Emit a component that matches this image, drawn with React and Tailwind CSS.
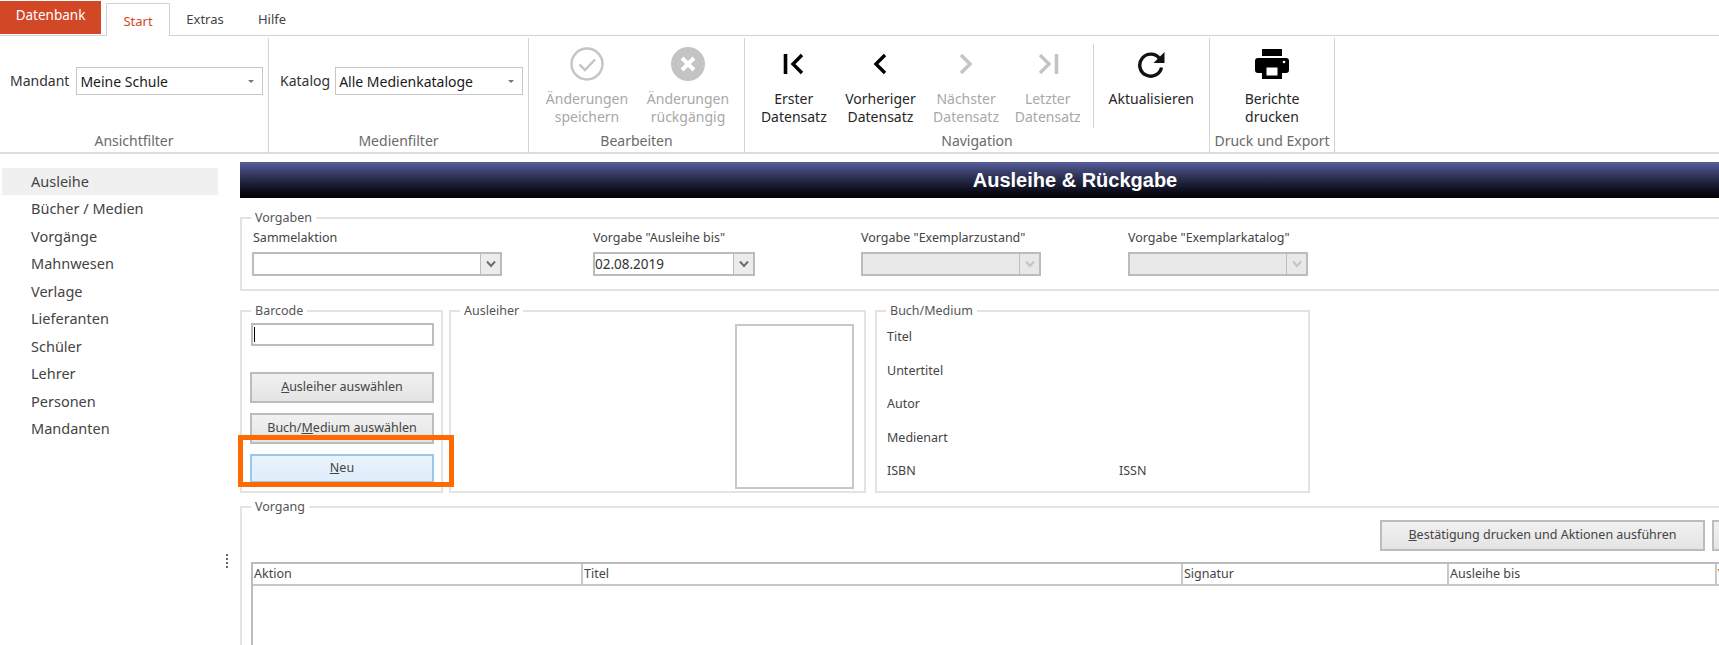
import React from 'react';

const uiFont = "font-['Noto_Sans',sans-serif]";

const Chevron = ({ flip, bar, color }) => (
  <svg width="28" height="28" viewBox="0 0 28 28" fill="none" stroke={color}>
    <g transform={flip ? 'translate(28,0) scale(-1,1)' : undefined}>
      {bar && <path d="M5.5 4v20" strokeWidth="3.6" />}
      <path d={bar ? 'M22 5l-9 9 9 9' : 'M19 5l-9 9 9 9'} strokeWidth="3.4" />
    </g>
  </svg>
);

const RefreshIcon = () => (
  <svg width="28" height="28" viewBox="0 0 28 28" fill="none">
    <path d="M22.5 8.5A11 11 0 1 0 24.5 17.5" stroke="#111" strokeWidth="3.4" />
    <path d="M27.5 2v11h-11z" fill="#111" />
  </svg>
);

const PrinterIcon = () => (
  <svg width="34" height="30" viewBox="0 0 34 30">
    <rect x="7" y="0" width="20" height="7" fill="#000" />
    <rect x="0" y="9" width="34" height="15" rx="3" fill="#000" />
    <rect x="7" y="15" width="20" height="15" fill="#000" />
    <rect x="11.5" y="18.5" width="11" height="8" fill="#fff" />
    <circle cx="29" cy="13" r="1.3" fill="#fff" />
  </svg>
);

const RibbonButton = ({ icon, lines, disabled, width }) => (
  <div className={`flex flex-col items-center pt-[4px] ${width} ${disabled ? 'text-[#a8a8a8]' : 'text-[#262626]'}`}>
    <div className="h-[44px] flex items-center justify-center">{icon}</div>
    <div className="mt-[4px] text-[14px] leading-[18px] text-center whitespace-nowrap">
      {lines.map((l) => (
        <div key={l}>{l}</div>
      ))}
    </div>
  </div>
);

const RibbonGroup = ({ width, label, children, className = '' }) => (
  <div className={`flex flex-col h-[115px] mt-[2px] border-r border-[#d4d4d4] ${width}`}>
    <div className={`flex-1 flex ${className}`}>{children}</div>
    <div className="h-[25px] text-center text-[14px] leading-[26px] text-[#6a6a6a] whitespace-nowrap">{label}</div>
  </div>
);

const RibbonCombo = ({ value, width }) => (
  <div className={`flex items-center justify-between h-[28px] bg-white border border-[#c6c6c6] pl-[3px] pr-[8px] text-[14px] text-[#1a1a1a] ${width}`}>
    <span>{value}</span>
    <span className="w-0 h-0 border-x-[3px] border-x-transparent border-t-[3px] border-t-[#777]" />
  </div>
);

const FormCombo = ({ value, width, disabled }) => (
  <div className={`flex h-[24px] border-2 border-[#bcbcbc] ${width} ${disabled ? 'bg-[#e8e8e8]' : 'bg-white'}`}>
    <span className="flex-1 text-[13.5px] leading-[20px] text-[#333]">{value}</span>
    <span className={`w-[20px] flex items-center justify-center border-l border-[#bcbcbc] ${disabled ? '' : 'bg-[#ececec]'}`}>
      <svg width="10" height="8" viewBox="0 0 10 8" fill="none" stroke={disabled ? '#c4c4c4' : '#6d6d6d'} strokeWidth="2">
        <path d="M1 1.5l4 4.5 4-4.5" />
      </svg>
    </span>
  </div>
);

const Group = ({ label, className = '', children }) => (
  <fieldset className={`border-2 border-[#e3e3e3] min-w-0 ${className}`}>
    <legend className="ml-[9px] px-[4px] text-[12.5px] leading-[16px] text-[#555]">{label}</legend>
    {children}
  </fieldset>
);

const FormButton = ({ children, className = '' }) => (
  <div className={`flex items-center justify-center border-2 border-[#bcbcbc] bg-gradient-to-b from-[#f1f1f1] to-[#e4e4e4] text-[12.5px] text-[#444] whitespace-nowrap ${className}`}>
    {children}
  </div>
);

const navItems = ['Ausleihe', 'Bücher / Medien', 'Vorgänge', 'Mahnwesen', 'Verlage', 'Lieferanten', 'Schüler', 'Lehrer', 'Personen', 'Mandanten'];
const bookRows = ['Titel', 'Untertitel', 'Autor', 'Medienart'];

export default function App() {
  return (
    <div className={`w-[1719px] h-[645px] overflow-hidden bg-white ${uiFont}`}>
      {/* Tabs */}
      <div className="flex items-end h-[36px] border-b border-[#d2d2d2] text-[13px]">
        <div className="w-[101px] h-[33px] mb-[1px] bg-[#d24726] text-white text-center text-[13.5px] leading-[29px]">Datenbank</div>
        <div className="ml-[5px] w-[64px] h-[33px] -mb-[1px] bg-white border border-b-0 border-[#d2d2d2] text-[#d24726] text-center leading-[34px]">Start</div>
        <div className="ml-[15px] w-[40px] h-[33px] text-[#444] text-center leading-[34px]">Extras</div>
        <div className="ml-[27px] w-[40px] h-[33px] text-[#444] text-center leading-[34px]">Hilfe</div>
      </div>

      {/* Ribbon */}
      <div className="flex h-[118px] border-b-2 border-[#dcdcdc]">
        <RibbonGroup width="w-[269px]" label="Ansichtfilter" className="pt-[29px] pl-[10px]">
          <div className="flex items-start gap-[7px] text-[14px] text-[#333]">
            <span className="leading-[28px]">Mandant</span>
            <RibbonCombo value="Meine Schule" width="w-[187px]" />
          </div>
        </RibbonGroup>
        <RibbonGroup width="w-[260px]" label="Medienfilter" className="pt-[29px] pl-[11px]">
          <div className="flex items-start gap-[5px] text-[14px] text-[#333]">
            <span className="leading-[28px]">Katalog</span>
            <RibbonCombo value="Alle Medienkataloge" width="w-[188px]" />
          </div>
        </RibbonGroup>
        <RibbonGroup width="w-[216px]" label="Bearbeiten" className="pl-[8px]">
          <RibbonButton
            width="w-[100px]"
            disabled
            lines={['Änderungen', 'speichern']}
            icon={
              <svg width="34" height="34" viewBox="0 0 34 34" fill="none" stroke="#c4c4c4">
                <circle cx="17" cy="17" r="15.5" strokeWidth="2.4" />
                <path d="M9.5 17.5l5.5 5.5 10-10.5" strokeWidth="2.4" />
              </svg>
            }
          />
          <RibbonButton
            width="w-[102px]"
            disabled
            lines={['Änderungen', 'rückgängig']}
            icon={
              <svg width="34" height="34" viewBox="0 0 34 34" fill="none">
                <circle cx="17" cy="17" r="17" fill="#c4c4c4" />
                <path d="M11 11l12 12M23 11L11 23" stroke="#fff" strokeWidth="4" />
              </svg>
            }
          />
        </RibbonGroup>
        <RibbonGroup width="w-[465px]" label="Navigation" className="pl-[8px]">
          <RibbonButton width="w-[82px]" lines={['Erster', 'Datensatz']} icon={<Chevron bar color="#000" />} />
          <RibbonButton width="w-[92px]" lines={['Vorheriger', 'Datensatz']} icon={<Chevron color="#000" />} />
          <RibbonButton width="w-[80px]" disabled lines={['Nächster', 'Datensatz']} icon={<Chevron flip color="#c4c4c4" />} />
          <RibbonButton width="w-[84px]" disabled lines={['Letzter', 'Datensatz']} icon={<Chevron flip bar color="#c4c4c4" />} />
          <div className="h-[84px] mt-[6px] ml-[3px] border-l border-[#d4d4d4]" />
          <RibbonButton width="w-[116px]" lines={['Aktualisieren']} icon={<RefreshIcon />} />
        </RibbonGroup>
        <RibbonGroup width="w-[125px]" label="Druck und Export">
          <RibbonButton width="w-full" lines={['Berichte', 'drucken']} icon={<PrinterIcon />} />
        </RibbonGroup>
      </div>

      {/* Body */}
      <div className="flex">
        <aside className="w-[216px] ml-[2px] pt-[14px] shrink-0">
          {navItems.map((item, i) => (
            <div
              key={item}
              className={`h-[27.45px] pl-[29px] text-[14.5px] leading-[26px] text-[#444] ${i === 0 ? 'bg-[#f0f0f0]' : ''}`}
            >
              {item}
            </div>
          ))}
        </aside>

        <div className="w-[18px] mr-[4px] shrink-0 pt-[400px] flex flex-col items-center gap-[2px]">
          <span className="w-[2px] h-[2px] bg-[#666]" />
          <span className="w-[2px] h-[2px] bg-[#666]" />
          <span className="w-[2px] h-[2px] bg-[#666]" />
          <span className="w-[2px] h-[2px] bg-[#666]" />
        </div>

        {/* Inhalt ist breiter als das Fenster und wird rechts abgeschnitten */}
        <main className="w-[1670px] shrink-0 pt-[8px]">
          <div className="h-[36px] bg-gradient-to-b from-[#565e9c] to-[#020204] text-white text-center font-['Liberation_Sans',sans-serif] font-bold text-[20px] leading-[36px]">
            Ausleihe &amp; Rückgabe
          </div>

          <Group label="Vorgaben" className="mt-[12px] h-[81px]">
            <div className="grid grid-cols-[341px_268px_267px_180px] pl-[10px] pt-[1px] text-[12.5px] text-[#444]">
              <div>
                <div className="h-[25px] pl-[1px] leading-[22px]">Sammelaktion</div>
                <FormCombo width="w-[250px]" />
              </div>
              <div>
                <div className="h-[25px] leading-[22px]">Vorgabe "Ausleihe bis"</div>
                <FormCombo width="w-[162px]" value="02.08.2019" />
              </div>
              <div>
                <div className="h-[25px] leading-[22px]">Vorgabe "Exemplarzustand"</div>
                <FormCombo width="w-[180px]" disabled />
              </div>
              <div>
                <div className="h-[25px] leading-[22px]">Vorgabe "Exemplarkatalog"</div>
                <FormCombo width="w-[180px]" disabled />
              </div>
            </div>
          </Group>

          <div className="flex mt-[12px] h-[192px] relative">
            <Group label="Barcode" className="w-[203px] h-[190px]">
              <div className="pl-[8px]">
                <div className="w-[183px] h-[23px] mt-[4px] ml-[1px] border-2 border-[#bcbcbc] flex items-center pl-[1px]">
                  <span className="w-[1px] h-[15px] bg-black" />
                </div>
                <FormButton className="w-[184px] h-[31px] mt-[26px]">
                  <span><u>A</u>usleiher auswählen</span>
                </FormButton>
                <FormButton className="w-[184px] h-[31px] mt-[10px]">
                  <span>Buch/<u>M</u>edium auswählen</span>
                </FormButton>
                <FormButton className="w-[184px] h-[29px] mt-[10px] !border-[#9cc6ee] !from-[#e9f3fc] !to-[#dfeefb]">
                  <span><u>N</u>eu</span>
                </FormButton>
              </div>
            </Group>

            <Group label="Ausleiher" className="w-[417px] h-[190px] ml-[6px]">
              <div className="flex justify-end pr-[10px]">
                <div className="w-[119px] h-[165px] mt-[5px] border-2 border-[#c8c8c8]" />
              </div>
            </Group>

            <Group label="Buch/Medium" className="w-[435px] h-[190px] ml-[9px] text-[12.5px] text-[#444]">
              <div className="pl-[10px] pt-[8px]">
                {bookRows.map((r) => (
                  <div key={r} className="h-[33.6px] leading-[20px]">{r}</div>
                ))}
                <div className="flex leading-[20px]">
                  <span className="w-[232px]">ISBN</span>
                  <span>ISSN</span>
                </div>
              </div>
            </Group>

            {/* Hervorhebung aus dem Handbuch */}
            <div className="absolute left-[-2px] top-[132px] w-[216px] h-[52px] border-[5px] border-[#ff6a00]" />
          </div>

          <Group label="Vorgang" className="mt-[4px] h-[200px]">
            <div className="pl-[9px]">
              <div className="flex gap-[7px] mt-[5px] pl-[1129px]">
                <FormButton className="w-[325px] h-[31px] shrink-0">
                  <span><u>B</u>estätigung drucken und Aktionen ausführen</span>
                </FormButton>
                <FormButton className="w-[150px] h-[31px] shrink-0" />
              </div>
              <div className="mt-[11px] border-2 border-[#bcbcbc] h-[120px] text-[12.5px] text-[#444]">
                <div className="flex h-[22px] leading-[20px] border-b-2 border-[#c8c8c8]">
                  <div className="w-[330px] pl-[1px] border-r-2 border-[#c8c8c8]">Aktion</div>
                  <div className="w-[600px] pl-[1px] border-r-2 border-[#c8c8c8]">Titel</div>
                  <div className="w-[266px] pl-[1px] border-r-2 border-[#c8c8c8]">Signatur</div>
                  <div className="w-[268px] pl-[1px] border-r-2 border-[#c8c8c8]">Ausleihe bis</div>
                  <div className="pl-[1px]">V</div>
                </div>
              </div>
            </div>
          </Group>
        </main>
      </div>
    </div>
  );
}
